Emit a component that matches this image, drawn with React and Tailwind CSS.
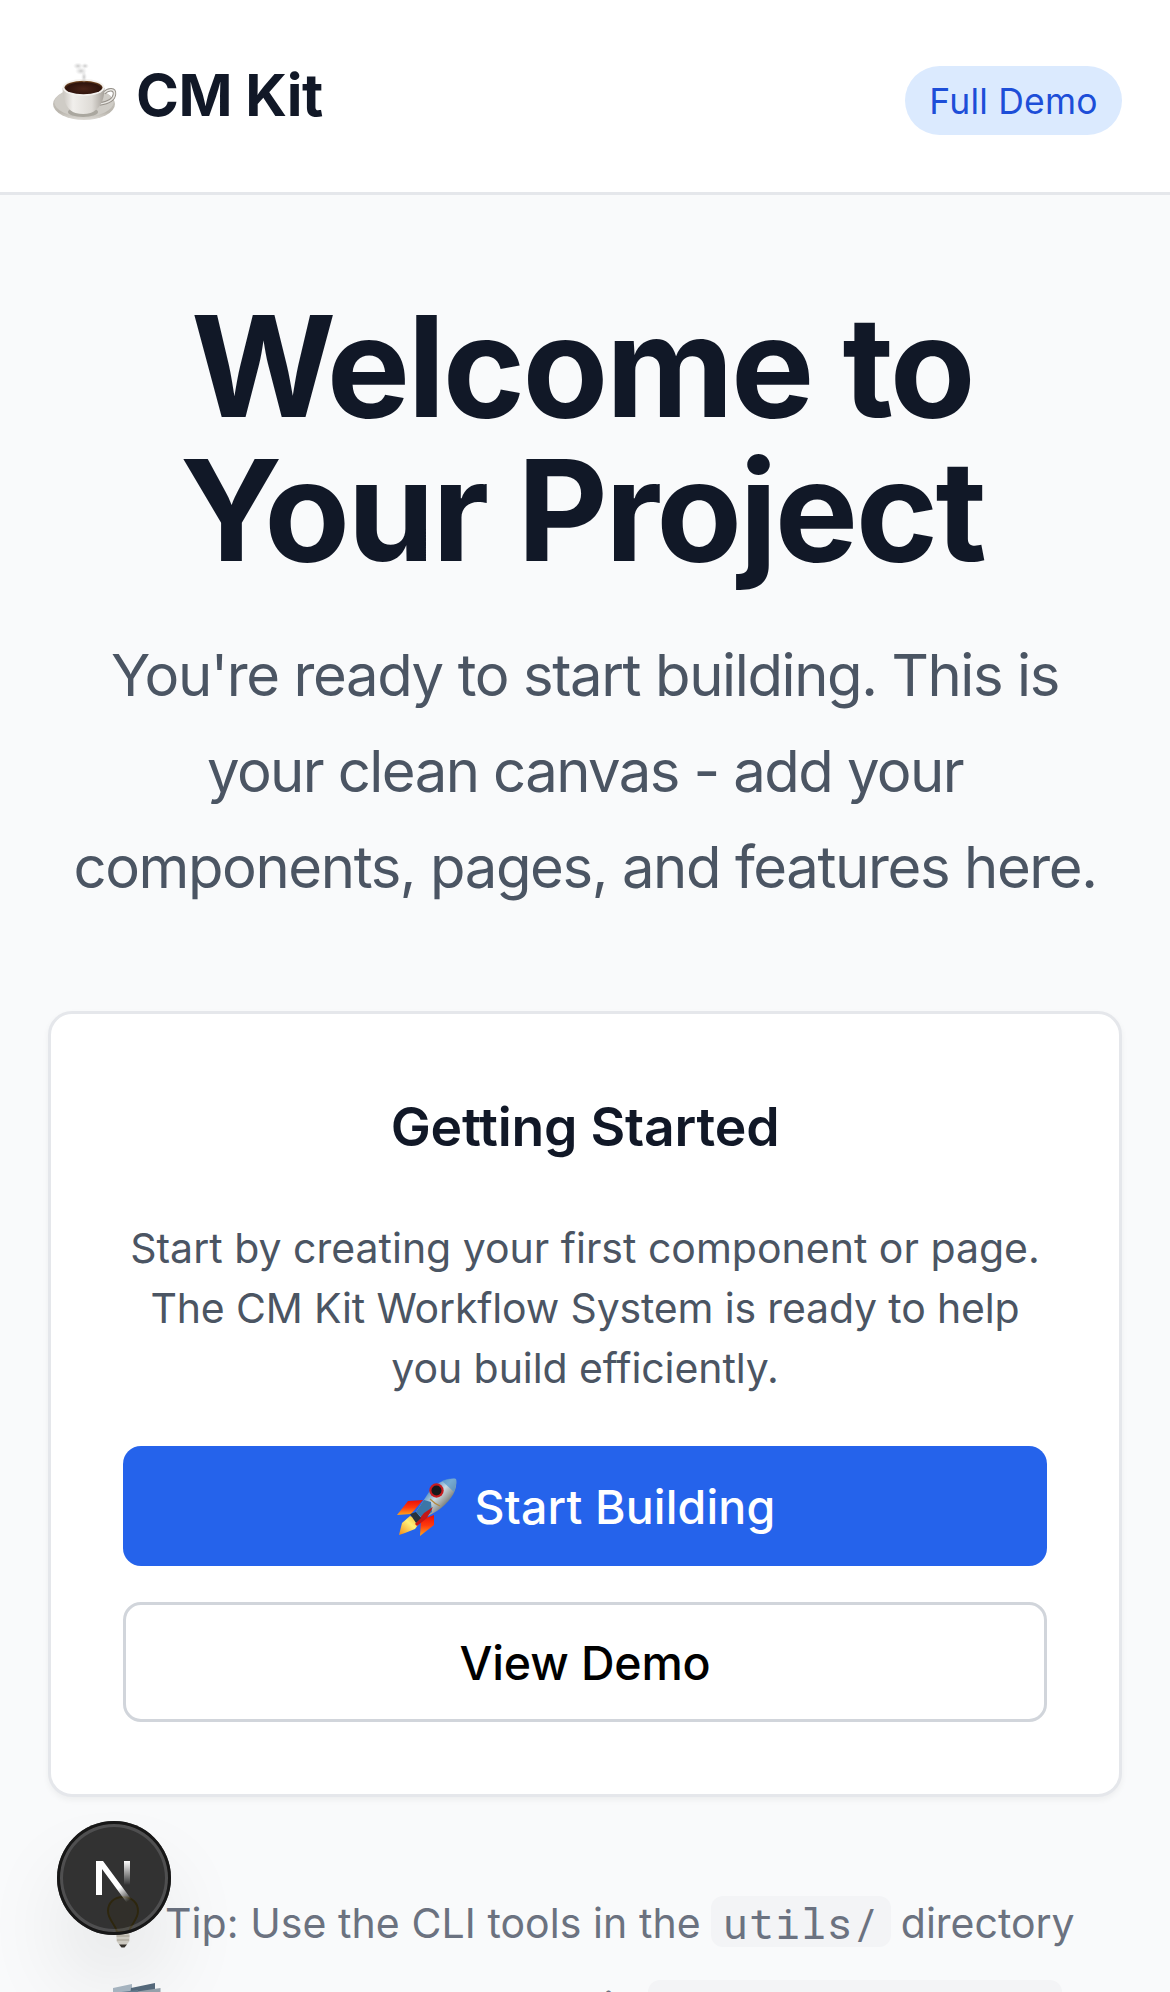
function Coffee() {
  return (
    <svg className="h-[60px] w-[66px] shrink-0" viewBox="0 0 66 60">
      <defs>
        <linearGradient id="saucer" x1="0" y1="0" x2="0" y2="1"><stop offset="0" stopColor="#d6d3ce" /><stop offset=".75" stopColor="#b9b5ad" /><stop offset="1" stopColor="#dedbd6" /></linearGradient>
        <linearGradient id="cup" x1="0" y1="0" x2="1" y2="0"><stop offset="0" stopColor="#c9c5bf" /><stop offset=".25" stopColor="#f1efec" /><stop offset=".7" stopColor="#dedbd6" /><stop offset="1" stopColor="#a5a099" /></linearGradient>
        <radialGradient id="brew" cx=".5" cy=".6" r=".6"><stop offset="0" stopColor="#4a2418" /><stop offset=".75" stopColor="#2e130c" /><stop offset="1" stopColor="#8a5a2b" /></radialGradient>
        <radialGradient id="steam"><stop offset="0" stopColor="#c4c4c4" stopOpacity=".9" /><stop offset="1" stopColor="#dddddd" stopOpacity="0" /></radialGradient>
      </defs>
      <ellipse cx="32" cy="42" rx="31" ry="16" fill="url(#saucer)" />
      <ellipse cx="32" cy="40.500" rx="29.500" ry="14" fill="#cfccc6" />
      <ellipse cx="31" cy="50" rx="15" ry="5" fill="#8d8880" opacity=".55" />
      <path d="M52 31c5-5 11-4 10.500 1-.500 6-8 9-15 10" fill="none" stroke="#96918a" strokeWidth="3.400" />
      <path d="M52 31c5-5 11-4 10.500 1-.500 6-8 9-15 10" fill="none" stroke="#e9e7e3" strokeWidth="1.600" />
      <path d="M10.500 26c0 14 6 23 13 25q8 2 15 0c8-3 14-11 14-25z" fill="url(#cup)" />
      <ellipse cx="31.500" cy="25.500" rx="21" ry="8.500" fill="#f3f1ee" />
      <ellipse cx="31.500" cy="25.500" rx="19" ry="6.800" fill="url(#brew)" />
      <ellipse cx="26" cy="4" rx="5" ry="3.500" fill="url(#steam)" />
      <ellipse cx="33" cy="4" rx="4" ry="3" fill="url(#steam)" />
      <ellipse cx="29" cy="9" rx="6" ry="4" fill="url(#steam)" />
      <ellipse cx="32" cy="15" rx="3" ry="6" fill="url(#steam)" />
    </svg>
  );
}

function Rocket() {
  return (
    <svg className="h-[60px] w-[60px] shrink-0" viewBox="0 0 60 60">
      <defs>
        <linearGradient id="hull" x1="26" y1="18" x2="46" y2="36" gradientUnits="userSpaceOnUse"><stop offset="0" stopColor="#4e8cc4" /><stop offset=".4" stopColor="#c9dbe4" /><stop offset=".7" stopColor="#9a9f9c" /><stop offset="1" stopColor="#4d5960" /></linearGradient>
        <linearGradient id="fin" x1="0" y1="0" x2="0" y2="1"><stop offset="0" stopColor="#e80f08" /><stop offset=".5" stopColor="#ff3a0c" /><stop offset="1" stopColor="#ffa51c" /></linearGradient>
        <linearGradient id="flame" x1="1" y1="0" x2="0" y2="1"><stop offset="0" stopColor="#f7a81b" /><stop offset=".45" stopColor="#fff17a" /><stop offset="1" stopColor="#f58a12" /></linearGradient>
      </defs>
      <path d="M26 22 11 23 0 37l14-1z" fill="url(#fin)" />
      <path d="M37 37v10L23 58l1-16z" fill="url(#fin)" />
      <path d="M13 38 5 45 2 57l6-2 10-4 6-8z" fill="url(#flame)" />
      <path d="M59 1c-10-1-20 4-27 13L19 34l7 7 14-8C53 24 61 13 59 1z" fill="url(#hull)" />
      <path d="m19 34 8-12 7 2 1 10-9 7z" fill="#3b76a7" />
      <path d="M59 1c-6-1-10 0-14 2l12 11q3-7 2-13z" fill="#5295ca" opacity=".7" />
      <path d="m36 29-9 6-9 11 2 2 10-8z" fill="#c31717" />
      <path d="m13 36 6-2 5 6-5 5z" fill="#29323b" />
      <circle cx="39.500" cy="12.500" r="7.200" fill="#c81c1f" />
      <circle cx="39.500" cy="12.500" r="5" fill="#17191c" />
      <path d="M33 21q5 5 10 7" stroke="#b3883e" strokeWidth="1.200" fill="none" />
    </svg>
  );
}

function Bulb() {
  return (
    <svg className="mr-[15px] mt-[3px] h-[54px] w-[54px] shrink-0" viewBox="0 0 54 54">
      <path d="M27 1c-9 0-15 6-15 14 0 9 8 14 9 21h12c1-7 9-12 9-21C42 7 36 1 27 1z" fill="#f3ecd2" stroke="#e2bd45" strokeWidth="2" />
      <path d="M20.500 36h13v9l-3 4h-7l-3-4z" fill="#d8d4cb" />
      <path d="M20.500 40h13M21 44h12" stroke="#aaa498" strokeWidth="1.200" />
      <path d="M23 48.500h8l-2.500 3h-3z" fill="#38342f" />
    </svg>
  );
}

function Books() {
  return (
    <svg className="mr-[14px] mt-[6px] h-[54px] w-[54px] shrink-0" viewBox="0 0 54 54">
      <path d="m5 5 19-4v12L5 18z" fill="#a9b8c4" />
      <path d="M23 5 47 0v16L21 20z" fill="#566b7d" />
      <path d="m26 9 26.500-4v14L26 23z" fill="#98a4ae" />
      <path d="m5 10 25-3-5 44H7z" fill="#667f92" />
    </svg>
  );
}

function NextBadge() {
  return (
    <div className="fixed left-[57px] top-[1821px] size-[114px] rounded-full bg-black/80 shadow-[inset_0_0_0_3px_#171717,inset_0_0_0_6px_rgba(255,255,255,0.14),0_48px_96px_-24px_rgba(0,0,0,0.24)]">
      <svg className="size-[114px]" viewBox="0 0 114 114" fill="none">
        <defs>
          <linearGradient id="diag" x1="56" y1="55" x2="73" y2="79" gradientUnits="userSpaceOnUse"><stop offset=".45" stopColor="#fff" /><stop offset="1" stopColor="#fff" stopOpacity="0" /></linearGradient>
          <linearGradient id="stem" x1="0" y1="40" x2="0" y2="64" gradientUnits="userSpaceOnUse"><stop stopColor="#fff" /><stop offset="1" stopColor="#fff" stopOpacity="0" /></linearGradient>
        </defs>
        <path d="M67 40h6v24h-6z" fill="url(#stem)" />
        <path d="M39 40h7l28.500 38.500-4.500 3.500L45 48v26h-6z" fill="url(#diag)" />
      </svg>
    </div>
  );
}

function Code({ children }) {
  return (
    <code className="mx-[10px] mt-[3px] h-[51px] rounded-[12px] bg-[#f3f4f6] px-[12px] font-['Roboto_Mono','DejaVu_Sans_Mono',monospace] text-[42px] leading-[53px] tracking-[0.8px]">{children}</code>
  );
}

export default function App() {
  return (
    <div className="h-[1992px] overflow-hidden bg-[#f9fafb] font-['Inter',sans-serif] text-[#111827]">
      <header className="flex h-[195px] items-start justify-between border-b-[3px] border-[#e5e7eb] bg-white pl-[52px] pr-[48px]">
        <h1 className="mt-[53px] flex h-[84px] gap-[18px] text-[58px] font-bold leading-[84px] tracking-[-0.5px]">
          <span className="mt-[9px]"><Coffee /></span>
          CM Kit
        </h1>
        <a className="mt-[66px] flex h-[69px] w-[217px] items-center justify-center rounded-full bg-[#dbeafe] pt-[2px] text-[35.500px] leading-[45px] tracking-[0.2px] text-[#1d4ed8]">Full Demo</a>
      </header>
      <main className="px-[48px] pt-[99px] text-center">
        <h2 className="-ml-[6px] whitespace-nowrap text-[140px] font-bold leading-[144px] tracking-[-2.6px]">Welcome to<br />Your Project</h2>
        <p className="mt-[45px] whitespace-nowrap text-[58px] leading-[96px] tracking-[-1.4px] text-[#4b5563]">
          You're ready to start building. This is<br />
          <span className="tracking-[-1.580px]">your clean canvas - add your</span><br />
          components, pages, and features here.
        </p>
        <section className="mt-[96px] rounded-[24px] border-[3px] border-[#e5e7eb] bg-white p-[72px] shadow-[0_3px_6px_rgba(0,0,0,0.05)]">
          <h3 className="text-[53.500px] font-semibold leading-[82px] tracking-[-0.2px]">Getting Started</h3>
          <p className="mt-[50px] whitespace-nowrap text-[41px] leading-[60px] text-[#4b5563]">
            Start by creating your first component or page.<br />
            <span className="tracking-[-0.160px]">The CM Kit Workflow System is ready to help</span><br />
            <span className="tracking-[-0.080px]">you build efficiently.</span>
          </p>
          <button className="mt-[48px] flex h-[120px] w-full items-center justify-center gap-[18px] rounded-[18px] bg-[#2563eb] pl-[2px] pt-[3px] text-[46.500px] font-medium tracking-[0.150px] text-white"><Rocket />Start Building</button>
          <button className="mt-[36px] flex h-[120px] w-full items-center justify-center rounded-[18px] border-[3px] border-[#d1d5db] pt-[3px] text-[46.500px] font-medium tracking-[-0.150px] text-black">View Demo</button>
        </section>
        <div className="mt-[96px] flex flex-col gap-[24px] whitespace-nowrap text-[41px] leading-[60px] text-[#6b7280]">
          <p className="flex h-[60px] items-start pl-[48px]"><Bulb /><span className="tracking-[0.070px]">Tip: Use the CLI tools in the</span><Code>utils/</Code><span>directory</span></p>
          <p className="flex h-[60px] items-start pl-[60px]"><Books /><span className="tracking-[0.1px] [word-spacing:4.400px]">New components go in</span><Code>src/components/</Code></p>
        </div>
      </main>
      <NextBadge />
    </div>
  );
}
